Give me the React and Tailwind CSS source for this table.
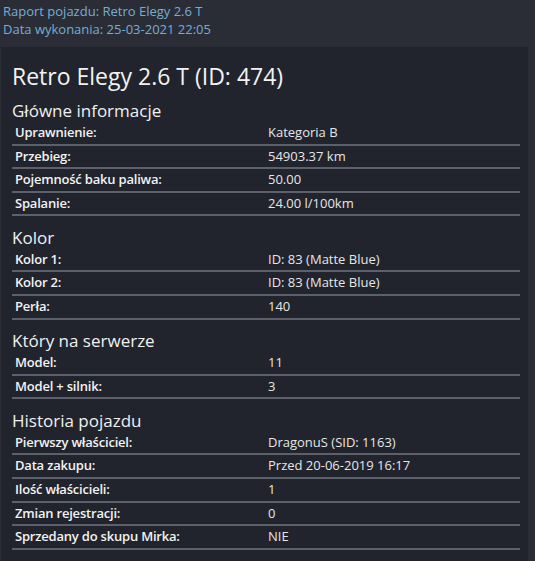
import React from "react";

const sections = [
  {
    title: "Główne informacje",
    rows: [
      ["Uprawnienie:", "Kategoria B"],
      ["Przebieg:", "54903.37 km"],
      ["Pojemność baku paliwa:", "50.00"],
      ["Spalanie:", "24.00 l/100km"],
    ],
  },
  {
    title: "Kolor",
    rows: [
      ["Kolor 1:", "ID: 83 (Matte Blue)"],
      ["Kolor 2:", "ID: 83 (Matte Blue)"],
      ["Perła:", "140"],
    ],
  },
  {
    title: "Który na serwerze",
    rows: [
      ["Model:", "11"],
      ["Model + silnik:", "3"],
    ],
  },
  {
    title: "Historia pojazdu",
    rows: [
      ["Pierwszy właściciel:", "DragonuS (SID: 1163)"],
      ["Data zakupu:", "Przed 20-06-2019 16:17"],
      ["Ilość właścicieli:", "1"],
      ["Zmian rejestracji:", "0"],
      ["Sprzedany do skupu Mirka:", "NIE"],
    ],
  },
];

export default function App() {
  return (
    <div className="w-[535px] h-[561px] bg-[#2a2d36] font-['Open_Sans',sans-serif] overflow-hidden flex flex-col">
      <div className="h-[47px] px-[3px] pt-[2px] text-[13px] leading-[18px] text-[#76aed2]">
        <div>Raport pojazdu: Retro Elegy 2.6 T</div>
        <div>Data wykonania: 25-03-2021 22:05</div>
      </div>
      <div className="flex-1 bg-[#21242d] mr-[7px] ml-[1px] pl-[11px] pr-[8px] pt-[14px]">
        <div className="text-[23px] leading-[30px] text-[#f2f2f2]">Retro Elegy 2.6 T (ID: 474)</div>
        {sections.map((s, i) => (
          <div key={s.title}>
            <div
              className={`${i === 0 ? "h-[31px]" : "h-[32.5px]"} flex items-end text-[17px] leading-[20px] text-[#f0f0f0] pb-[1px]`}
            >
              {s.title}
            </div>
            {s.rows.map(([k, v]) => (
              <div
                key={k}
                className="grid grid-cols-[256px_1fr] h-[23.6px] border-b-2 border-[#5b606a] text-[13px] leading-[21.6px]"
              >
                <div className="pl-[3px] font-semibold text-[#f2f2f2] tracking-[-0.2px]">{k}</div>
                <div className="text-[#e6e6e6]">{v}</div>
              </div>
            ))}
          </div>
        ))}
      </div>
    </div>
  );
}
